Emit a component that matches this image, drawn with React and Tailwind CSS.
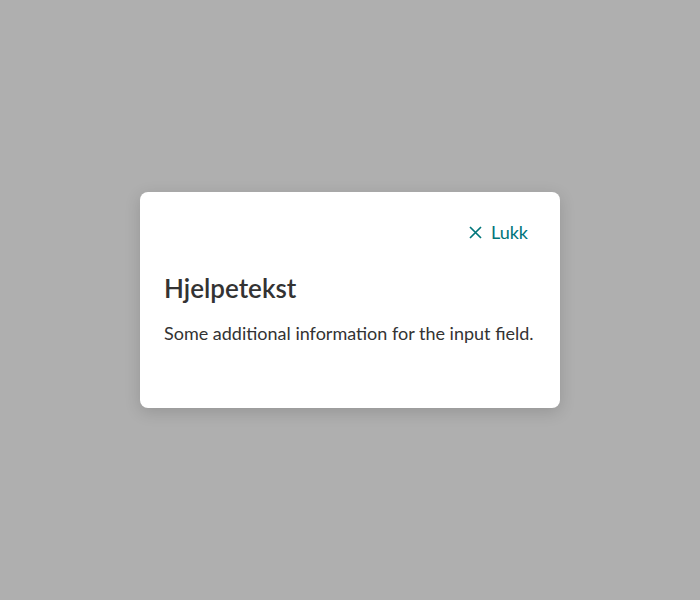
export default function App() {
  return (
    <div className="flex h-[600px] w-full items-center justify-center bg-[#afafaf] font-['Lato',sans-serif]">
      <div className="flex h-[216px] w-[420px] flex-col rounded-lg bg-white px-6 pt-5 shadow-[0_4px_16px_rgba(0,0,0,0.15)]">
        <div className="flex justify-end">
          <button className="flex items-center gap-[9px] px-2 py-2 text-[18px] leading-6 text-[#00757a]">
            <svg width="13" height="13" viewBox="0 0 13 13" fill="none" stroke="currentColor" strokeWidth="1.7">
              <path d="M1 1L12 12M12 1L1 12" />
            </svg>
            Lukk
          </button>
        </div>
        <h2 className="mt-5 text-[26px] font-semibold leading-8 text-[#333]">Hjelpetekst</h2>
        <p className="mt-[17px] text-[18px] leading-6 text-[#333]">
          Some additional information for the input field.
        </p>
      </div>
    </div>
  );
}
